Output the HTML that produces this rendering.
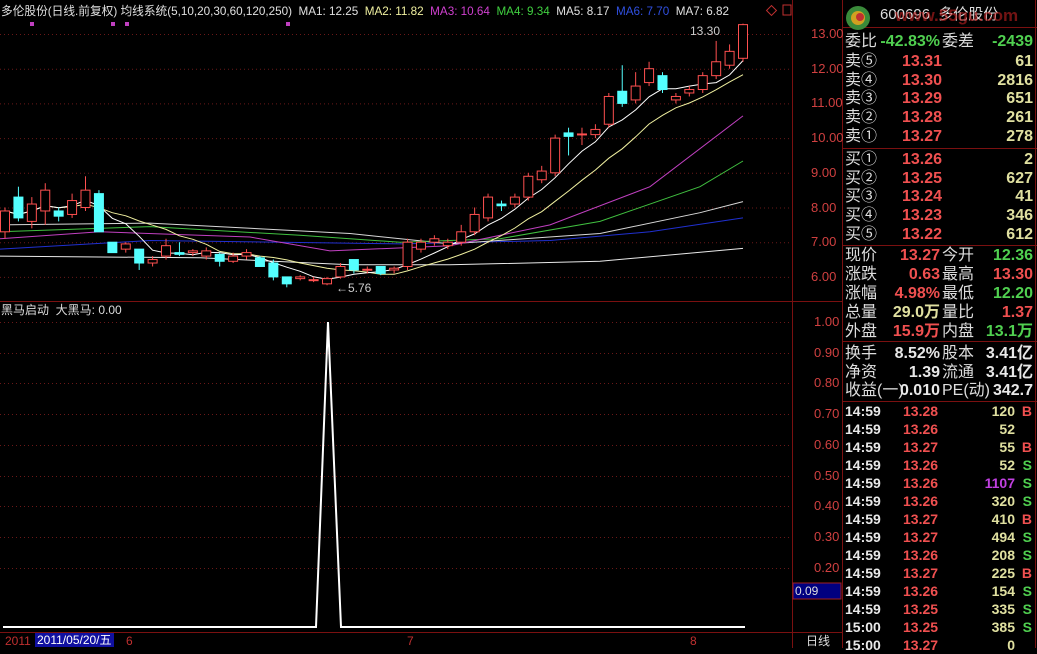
<!DOCTYPE html><html><head><meta charset="utf-8"><style>
body{margin:0;background:#000;width:1037px;height:648px;overflow:hidden;position:relative;font-family:"Liberation Sans","Noto Sans CJK SC",sans-serif}
.t{position:absolute;white-space:nowrap;font-size:12px;line-height:14px}
.r{position:absolute;left:845px;width:190px;height:19px;font-size:16px;line-height:19px;color:#ddd;font-family:"Liberation Sans","Noto Sans CJK SC",sans-serif}
.r span{position:absolute;top:0;white-space:nowrap}
.tk{position:absolute;left:845px;width:190px;height:18px;font-size:14px;line-height:18px;font-family:"Liberation Sans Narrow","Liberation Sans",sans-serif;font-weight:bold}
.tk span{position:absolute;top:0}
.R{color:#f05050}.G{color:#50d050}.Y{color:#e0e0a0}.W{color:#e8e8e8}.M{color:#c040e0}
</style></head><body>
<svg id="s" width="1037" height="648" style="position:absolute;left:0;top:0">
<g stroke="#7a1010" stroke-width="1" fill="none">
<line x1="792.5" y1="0" x2="792.5" y2="648"/>
<line x1="842.5" y1="0" x2="842.5" y2="648"/>
<line x1="0" y1="301.5" x2="842" y2="301.5"/>
<line x1="0" y1="632.5" x2="842" y2="632.5"/>
<line x1="843" y1="148.5" x2="1037" y2="148.5"/>
<line x1="843" y1="245.5" x2="1037" y2="245.5"/>
<line x1="843" y1="341.5" x2="1037" y2="341.5"/>
<line x1="843" y1="401.5" x2="1037" y2="401.5"/>
<line x1="843" y1="27.5" x2="1037" y2="27.5"/>
<line x1="1035.5" y1="0" x2="1035.5" y2="648"/>
</g>
<g id="grid" stroke="#6a1818" stroke-dasharray="1,3"></g>
<g id="ma"></g><g id="cd"></g>
<polyline points="3,627 316,627 328,322 341,627 745,627" fill="none" stroke="#fff" stroke-width="2"/>
<rect x="793" y="583" width="48" height="16" fill="#000080" stroke="#a02020"/>
<g fill="#c040c0"><rect x="30" y="22" width="4" height="4"/><rect x="111" y="22" width="4" height="4"/><rect x="125" y="22" width="4" height="4"/><rect x="286" y="22" width="4" height="4"/></g>
<rect x="768" y="7" width="7" height="7" fill="none" stroke="#c03030" transform="rotate(45 771.5 10.5)"/>
<rect x="783" y="5" width="8" height="10" fill="none" stroke="#c03030"/>
<circle cx="858" cy="18" r="12" fill="#3a8a3a"/><circle cx="858" cy="18" r="7" fill="#d0a020"/><circle cx="860" cy="17" r="4" fill="#c03030"/>
</svg>
<div class="t" style="left:1px;top:5px;font-size:11.7px;color:#e0e0e0">多伦股份(日线.前复权) 均线系统(5,10,20,30,60,120,250)&nbsp; MA1: 12.25&nbsp; <span style="color:#f0f0a0">MA2: 11.82</span>&nbsp; <span style="color:#d040d0">MA3: 10.64</span>&nbsp; <span style="color:#40d040">MA4: 9.34</span>&nbsp; <span style="color:#e0e0e0">MA5: 8.17</span>&nbsp; <span style="color:#3050e0">MA6: 7.70</span>&nbsp; MA7: 6.82</div>
<div class="t" style="left:690px;top:24px;color:#ccc">13.30</div>
<div class="t" style="left:336px;top:281px;color:#ccc">←5.76</div>
<div class="t" style="left:1px;top:303px;color:#ddd">黑马启动&nbsp; 大黑马: 0.00</div>
<div id="ax"></div>
<div class="t" style="left:795px;top:584px;color:#ddd">0.09</div>
<div class="t" style="left:5px;top:634px;color:#c03030">2011</div>
<div class="t" style="left:35px;top:633px;background:#1010a0;color:#fff;padding:0 2px">2011/05/20/五</div>
<div class="t" style="left:126px;top:634px;color:#c03030">6</div>
<div class="t" style="left:407px;top:634px;color:#c03030">7</div>
<div class="t" style="left:690px;top:634px;color:#c03030">8</div>
<div class="t" style="left:806px;top:634px;color:#ddd">日线</div>
<div class="t" style="left:880px;top:8px;font-size:15px;color:#ddd">600696&nbsp; 多伦股份</div>
<div class="t" style="left:895px;top:9px;font-size:17px;font-weight:bold;color:#c02020;opacity:.6">www.55gu.com</div>
<div id="rp"></div>
<script>
var Y=function(p){return 34+(13-p)*34.7};
var g=document.getElementById('grid'),h='';
for(var p=6;p<=13;p++){h+='<line x1="0" y1="'+(Y(p)+.5)+'" x2="792" y2="'+(Y(p)+.5)+'"/>';}
for(var v=1;v>=0.15;v-=0.1){var yy=Math.round(322+(1-v)*307);h+='<line x1="0" y1="'+(yy+.5)+'" x2="792" y2="'+(yy+.5)+'"/>';}
g.innerHTML=h;
var ax='';
for(var p=6;p<=13;p++)ax+='<div class="t" style="left:811px;top:'+(Y(p)-7)+'px;font-size:13px;color:#d04040">'+p.toFixed(2)+'</div>';
for(var i=10;i>=2;i--){var v=i/10;var yy=Math.round(322+(1-v)*307);ax+='<div class="t" style="left:814px;top:'+(yy-7)+'px;font-size:13px;color:#d04040">'+v.toFixed(2)+'</div>';}
document.getElementById('ax').innerHTML=ax;
var C=[[7.3,7.9,8.0,7.1],[8.3,7.7,8.6,7.6],[7.6,8.1,8.3,7.4],[7.9,8.5,8.7,7.5],[7.9,7.75,8.0,7.6],[7.8,8.2,8.4,7.7],[8.0,8.5,8.9,7.9],[8.4,7.3,8.5,7.3],[7.0,6.7,7.0,6.7],[6.8,6.95,7.0,6.7],[6.8,6.4,6.8,6.2],[6.4,6.5,6.6,6.3],[6.6,6.9,7.1,6.5],[6.7,6.65,7.0,6.6],[6.7,6.75,6.8,6.6],[6.6,6.75,6.85,6.5],[6.65,6.45,6.7,6.3],[6.45,6.6,6.7,6.4],[6.6,6.7,6.8,6.5],[6.55,6.3,6.6,6.3],[6.4,6.0,6.5,5.9],[6.0,5.8,6.0,5.7],[5.95,6.0,6.05,5.9],[5.9,5.92,6.0,5.85],[5.8,5.95,6.0,5.76],[6.0,6.3,6.4,5.95],[6.5,6.2,6.5,6.1],[6.2,6.22,6.3,6.1],[6.3,6.1,6.3,6.05],[6.2,6.25,6.3,6.1],[6.3,7.0,7.1,6.2],[6.8,7.0,7.1,6.7],[7.0,7.1,7.2,6.9],[6.9,7.0,7.1,6.8],[7.0,7.3,7.5,6.9],[7.3,7.8,8.0,7.2],[7.7,8.3,8.4,7.6],[8.1,8.05,8.2,7.9],[8.1,8.3,8.4,8.0],[8.3,8.9,9.0,8.2],[8.8,9.05,9.2,8.7],[9.0,10.0,10.1,8.9],[10.15,10.05,10.3,9.5],[10.1,10.12,10.3,9.8],[10.1,10.25,10.4,10.0],[10.4,11.2,11.3,10.3],[11.35,11.0,12.1,10.9],[11.1,11.5,11.9,11.0],[11.6,12.0,12.2,11.5],[11.8,11.4,11.9,11.3],[11.1,11.2,11.3,11.0],[11.3,11.4,11.5,11.2],[11.4,11.8,11.9,11.3],[11.8,12.2,12.8,11.7],[12.1,12.5,12.7,12.0],[12.3,13.27,13.3,12.2]];
var s='',n=C.length;
function X(i){return 5+i*(738/(n-1));}
for(var i=0;i<n;i++){var c=C[i],x=X(i),o=Y(c[0]),cl=Y(c[1]),hi=Y(c[2]),lo=Y(c[3]);
var up=c[1]>=c[0],col=up?'#ff5050':'#54ffff',t=Math.min(o,cl),bh=Math.max(1,Math.abs(o-cl));
s+='<line x1="'+x+'" y1="'+hi+'" x2="'+x+'" y2="'+lo+'" stroke="'+col+'"/>';
s+='<rect x="'+(x-4.5)+'" y="'+t+'" width="9" height="'+bh+'" fill="'+(up?'#000':col)+'" stroke="'+col+'"/>';}
document.getElementById('cd').innerHTML=s;
function ma(k,col){var pts=[];for(var i=0;i<n;i++){var a=0,m=0;for(var j=Math.max(0,i-k+1);j<=i;j++){a+=C[j][1];m++;}pts.push(X(i).toFixed(1)+','+Y(a/m).toFixed(1));}return '<polyline points="'+pts.join(' ')+'" fill="none" stroke="'+col+'"/>';}
function pl(a,col){var pts=[];for(var i=0;i<a.length;i+=2)pts.push(a[i]+','+Y(a[i+1]).toFixed(1));return '<polyline points="'+pts.join(' ')+'" fill="none" stroke="'+col+'"/>';}
var m='';
m+=pl([0,6.8,150,7.05,400,6.95,550,7.05,650,7.3,743,7.7],'#2030d0');
m+=pl([0,7.5,150,7.55,350,7.25,450,6.95,600,7.25,700,7.85,743,8.17],'#d8d8d8');
m+=pl([0,7.3,150,7.45,300,7.2,400,7.0,500,7.1,600,7.6,700,8.6,743,9.34],'#40c040');
m+=pl([0,7.1,100,7.3,250,7.15,330,6.75,450,6.9,550,7.5,650,8.6,743,10.64],'#c040c0');
m+=pl([0,6.6,200,6.55,350,6.35,450,6.35,600,6.45,743,6.82],'#e8e8e8');
m+=ma(10,'#f0f0a0')+ma(5,'#ffffff');
document.getElementById('ma').innerHTML=m;
function row(y,l,v1,c1,l2,v2,c2,x1){return '<div class="r" style="top:'+y+'px"><span style="left:0">'+l+'</span><span class="'+c1+'" style="right:'+(x1||95)+'px;font-weight:bold">'+v1+'</span><span style="left:97px">'+l2+'</span><span class="'+c2+'" style="right:2px;font-weight:bold">'+v2+'</span></div>';}
var r=row(32,'委比','-42.83%','G','委差','-2439','G');
var sl=['⑤','④','③','②','①'],sp=['13.31','13.30','13.29','13.28','13.27'],sv=['61','2816','651','261','278'];
for(var i=0;i<5;i++)r+='<div class="r" style="top:'+(52+i*18.7)+'px"><span>卖'+sl[i]+'</span><span class="R" style="left:57px;font-weight:bold">'+sp[i]+'</span><span class="Y" style="right:2px;font-weight:bold">'+sv[i]+'</span></div>';
var bl=['①','②','③','④','⑤'],bp=['13.26','13.25','13.24','13.23','13.22'],bv=['2','627','41','346','612'];
for(var i=0;i<5;i++)r+='<div class="r" style="top:'+(150+i*18.7)+'px"><span>买'+bl[i]+'</span><span class="R" style="left:57px;font-weight:bold">'+bp[i]+'</span><span class="Y" style="right:2px;font-weight:bold">'+bv[i]+'</span></div>';
r+=row(246,'现价','13.27','R','今开','12.36','G');
r+=row(265,'涨跌','0.63','R','最高','13.30','R');
r+=row(284,'涨幅','4.98%','R','最低','12.20','G');
r+=row(303,'总量','29.0万','Y','量比','1.37','R');
r+=row(322,'外盘','15.9万','R','内盘','13.1万','G');
r+=row(344,'换手','8.52%','W','股本','3.41亿','W');
r+=row(363,'净资','1.39','W','流通','3.41亿','W');
r+=row(381,'收益(一)','0.010','W','PE(动)','342.7','W');
var T=[['14:59','13.28','120','B'],['14:59','13.26','52',''],['14:59','13.27','55','B'],['14:59','13.26','52','S'],['14:59','13.26','1107','S'],['14:59','13.26','320','S'],['14:59','13.27','410','B'],['14:59','13.27','494','S'],['14:59','13.26','208','S'],['14:59','13.27','225','B'],['14:59','13.26','154','S'],['14:59','13.25','335','S'],['15:00','13.25','385','S'],['15:00','13.27','0','']];
for(var i=0;i<T.length;i++){var t=T[i];r+='<div class="tk" style="top:'+(402+i*18)+'px"><span class="W" style="left:0">'+t[0]+'</span><span class="R" style="left:58px">'+t[1]+'</span><span class="'+(t[2]=='1107'?'M':'Y')+'" style="right:20px">'+t[2]+'</span><span class="'+(t[3]=='B'?'R':'G')+'" style="right:3px">'+t[3]+'</span></div>';}
document.getElementById('rp').innerHTML=r;
</script>
</body></html>
